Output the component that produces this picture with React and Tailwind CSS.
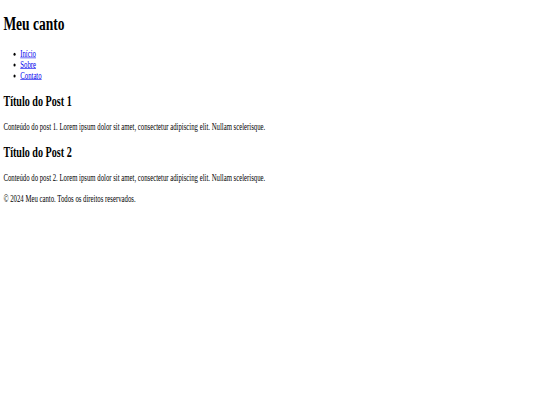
export default function App() {
  return (
    <div className="w-[540px] h-[405px] overflow-hidden bg-white">
      <div className="w-[1280px] h-[675px] origin-top-left scale-x-[0.421875] scale-y-[0.6] text-black font-['Liberation_Serif',serif] text-[16px] leading-[normal]">
        <div className="pt-[21.44px] px-[8px]">
          <header>
            <h1 className="text-[32px] font-bold leading-[normal] mb-[22.5px]">Meu canto</h1>
            <nav>
              <ul className="list-disc pl-[40px] mb-[16px]">
                <li><a href="#" className="text-[#0000ee] underline">Início</a></li>
                <li><a href="#" className="text-[#0000ee] underline">Sobre</a></li>
                <li><a href="#" className="text-[#0000ee] underline">Contato</a></li>
              </ul>
            </nav>
          </header>
          <main>
            <article>
              <h2 className="text-[24px] font-bold leading-[normal] mt-[20px] mb-[19.92px]">Título do Post 1</h2>
              <p className="mb-[16px]">Conteúdo do post 1. Lorem ipsum dolor sit amet, consectetur adipiscing elit. Nullam scelerisque.</p>
            </article>
            <article>
              <h2 className="text-[24px] font-bold leading-[normal] mt-[20px] mb-[19.92px]">Título do Post 2</h2>
              <p className="mb-[16px]">Conteúdo do post 2. Lorem ipsum dolor sit amet, consectetur adipiscing elit. Nullam scelerisque.</p>
            </article>
          </main>
          <footer>
            <p className="mt-[17.5px]">© 2024 Meu canto. Todos os direitos reservados.</p>
          </footer>
        </div>
      </div>
    </div>
  );
}
